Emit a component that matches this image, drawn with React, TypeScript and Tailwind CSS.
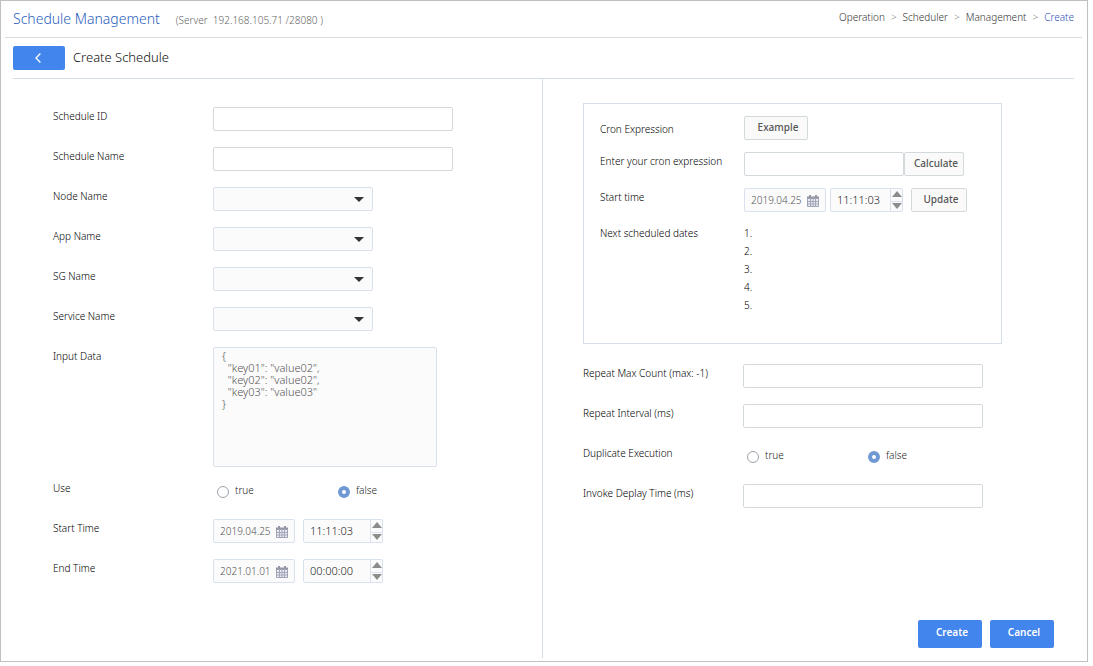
import React from "react"

interface RowProps {
    label: string;
    htmlFor?: string;
    className?: string;
    children: React.ReactNode;
}

const Row: React.FC<RowProps> = ({ label, htmlFor, className = "h-10", children }) => {
    return (
        <div className={`flex items-start ${className}`}>
            <label htmlFor={htmlFor} className="w-40 shrink-0 leading-[18px]">{label}</label>
            {children}
        </div>
    )
}

const TextField: React.FC<{ id: string; className?: string }> = ({ id, className = "w-60" }) => {
    return (
        <input id={id} type="text" className={`h-6 rounded-xs border border-[#d3dadd] bg-white px-2 ${className}`} />
    )
}

const SelectField: React.FC<{ id: string }> = ({ id }) => {
    return (
        <div className="relative w-40">
            <select id={id} className="h-6 w-full appearance-none rounded-xs border border-[#dae1ee] bg-[#fbfbfb] px-2">
                <option value=""></option>
            </select>
            <svg className="pointer-events-none absolute right-[9px] top-2.5 h-[5px] w-[10px]" viewBox="0 0 10 5" fill="#333">
                <path d="M0 0h10L5 5z" />
            </svg>
        </div>
    )
}

const CalendarIcon = () => {
    return (
        <svg width="12" height="12" viewBox="0 0 12 12">
            <path d="M0 1.5h2V0h2v1.5h4V0h2v1.5h2V4H0z" fill="#9597a6" />
            <path d="M0.5 3.5h11v8h-11z" fill="#e9ebf1" stroke="#9fa3b4" />
            <path d="M3.5 4v7.5M6 4v7.5M8.5 4v7.5M1 6.5h10M1 9h10" stroke="#a3a8ba" strokeWidth="1" />
        </svg>
    )
}

const DateField: React.FC<{ id: string; value: string; label: string }> = ({ id, value, label }) => {
    return (
        <div className="flex h-6 w-[82px] shrink-0 items-center rounded-xs border border-[#dae1ee] bg-[#fbfbfb] pl-1.5 text-[#555]">
            <input id={id} type="text" aria-label={label} defaultValue={value} className="w-14 bg-transparent" />
            <button type="button" aria-label="Open calendar" className="pt-0.5">
                <CalendarIcon />
            </button>
        </div>
    )
}

interface TimeFieldProps {
    value: string;
    label: string;
    className?: string;
}

const TimeField: React.FC<TimeFieldProps> = ({ value, label, className = "w-20" }) => {
    return (
        <div className={`flex h-6 shrink-0 rounded-xs border border-[#dae1ee] bg-[#fbfbfb] ${className}`}>
            <input type="text" aria-label={label} defaultValue={value} className="min-w-0 flex-1 bg-transparent pl-1.5 text-[11px] text-[#222]" />
            <div className="flex w-3 flex-col border-l border-[#dae1ee]">
                <button type="button" aria-label="Increase" className="flex flex-1 justify-center border-b border-[#dae1ee] pt-0.5">
                    <svg width="10" height="6" viewBox="0 0 10 6" fill="#8c8c8c"><path d="M0 6h10L5 0z" /></svg>
                </button>
                <button type="button" aria-label="Decrease" className="flex flex-1 items-center justify-center">
                    <svg width="10" height="6" viewBox="0 0 10 6" fill="#8c8c8c"><path d="M0 0h10L5 6z" /></svg>
                </button>
            </div>
        </div>
    )
}

const TrueFalse: React.FC<{ name: string }> = ({ name }) => {
    const radio = "mt-1 size-3 appearance-none rounded-full border border-[#9ba3aa] bg-white checked:border-4 checked:border-[#6f99d3]"
    return (
        <div className="flex pl-1 pt-[3px] text-[#222]">
            <label className="flex w-[121px] gap-1.5">
                <input type="radio" name={name} value="true" className={radio} />
                <span className="leading-4">true</span>
            </label>
            <label className="flex gap-1.5">
                <input type="radio" name={name} value="false" defaultChecked className={radio} />
                <span className="leading-4">false</span>
            </label>
        </div>
    )
}

const GrayButton: React.FC<{ text: string; className: string }> = ({ text, className }) => {
    return (
        <button type="button" className={`h-6 shrink-0 rounded-xs border border-[#d3dadd] bg-[#fafafa] pb-0.5 pl-1 font-medium text-[#555] ${className}`}>
            {text}
        </button>
    )
}

const CronBox = () => {
    const label = "w-36 shrink-0 leading-[18px]"
    return (
        <section className="mb-5 min-h-[241px] w-[419px] border border-[#d9dfe9] pl-4 pt-3">
            <div className="flex h-9">
                <span className={`${label} pt-1`}>Cron Expression</span>
                <GrayButton text="Example" className="w-16" />
            </div>
            <div className="flex h-9">
                <label htmlFor="cron" className={label}>Enter your cron expression</label>
                <TextField id="cron" className="w-40" />
                <GrayButton text="Calculate" className="w-[60px]" />
            </div>
            <div className="flex h-9">
                <label htmlFor="cronDate" className={label}>Start time</label>
                <DateField id="cronDate" label="Start time date" value="2019.04.25" />
                <div className="ml-1 mr-2 flex">
                    <TimeField label="Start time" value="11:11:03" className="w-[73px]" />
                </div>
                <GrayButton text="Update" className="w-14" />
            </div>
            <div className="flex">
                <span className={label}>Next scheduled dates</span>
                <ol className="leading-[18px]">
                    {[1, 2, 3, 4, 5].map((n) => <li key={n}>{n}.</li>)}
                </ol>
            </div>
        </section>
    )
}

const crumbs = ["Operation", "Scheduler", "Management"]

const inputData = `{
  "key01": "value02",
  "key02": "value02",
  "key03": "value03"
}`

const App = () => {
    return (
        <div className="flex min-h-screen bg-white pb-1 pr-[5px] font-['Noto_Sans',sans-serif] text-[10px] font-light text-black">
            <div className="flex flex-1 flex-col border border-[#c0c0c0] pb-[3px]">
                <header className="ml-1 mr-[5px] flex h-[37px] items-center justify-between border-b border-[#d8dce0] px-2">
                    <div className="flex items-baseline gap-4 pb-0.5">
                        <h1 className="text-[14px] font-light text-[#2a61bd]">Schedule Management</h1>
                        <span className="text-[#666]">(Server&nbsp; 192.168.105.71 /28080 )</span>
                    </div>
                    <nav className="flex gap-1.5 pb-1 text-[#333]">
                        {crumbs.map((name) => (
                            <React.Fragment key={name}>
                                <a href="#">{name}</a>
                                <span className="text-[#777]">&gt;</span>
                            </React.Fragment>
                        ))}
                        <a href="#" className="text-[#2f4fb8]">Create</a>
                    </nav>
                </header>
                <main className="ml-3 mr-[13px] flex flex-1 flex-col">
                    <div className="flex h-[41px] items-center gap-2 border-b border-[#d6dde8]">
                        <button type="button" aria-label="Back" className="flex h-6 w-[52px] items-center justify-center rounded-xs bg-[#4285ec] pr-0.5">
                            <svg width="6" height="10" viewBox="0 0 6 10" fill="none" stroke="#fff" strokeWidth="1.3">
                                <path d="M5.4 0.5L1 5l4.4 4.5" />
                            </svg>
                        </button>
                        <h2 className="text-[13px] font-light text-[#111]">Create Schedule</h2>
                    </div>
                    <form className="mr-px grid flex-1 grid-cols-2">
                        <div className="border-r border-[#d6dde8] pl-10 pt-7">
                            <Row label="Schedule ID" htmlFor="scheduleId"><TextField id="scheduleId" /></Row>
                            <Row label="Schedule Name" htmlFor="scheduleName"><TextField id="scheduleName" /></Row>
                            <Row label="Node Name" htmlFor="node"><SelectField id="node" /></Row>
                            <Row label="App Name" htmlFor="app"><SelectField id="app" /></Row>
                            <Row label="SG Name" htmlFor="sg"><SelectField id="sg" /></Row>
                            <Row label="Service Name" htmlFor="service"><SelectField id="service" /></Row>
                            <Row label="Input Data" htmlFor="inputData" className="h-[132px]">
                                <textarea
                                    id="inputData"
                                    defaultValue={inputData}
                                    className="h-[120px] w-56 resize-none rounded-xs border border-[#dae1ee] bg-[#fbfbfb] px-2 py-0.5 text-[11px] leading-3 text-[#555]"
                                />
                            </Row>
                            <Row label="Use"><TrueFalse name="use" /></Row>
                            <Row label="Start Time" htmlFor="startDate">
                                <div className="flex gap-2">
                                    <DateField id="startDate" label="Start date" value="2019.04.25" />
                                    <TimeField label="Start time of day" value="11:11:03" />
                                </div>
                            </Row>
                            <Row label="End Time" htmlFor="endDate">
                                <div className="flex gap-2">
                                    <DateField id="endDate" label="End date" value="2021.01.01" />
                                    <TimeField label="End time of day" value="00:00:00" />
                                </div>
                            </Row>
                        </div>
                        <div className="flex flex-col pl-10 pt-6">
                            <CronBox />
                            <Row label="Repeat Max Count (max: -1)" htmlFor="maxCount"><TextField id="maxCount" /></Row>
                            <Row label="Repeat Interval (ms)" htmlFor="interval"><TextField id="interval" /></Row>
                            <Row label="Duplicate Execution"><TrueFalse name="duplicate" /></Row>
                            <Row label="Invoke Deplay Time (ms)" htmlFor="delay"><TextField id="delay" /></Row>
                            <div className="mb-2.5 mr-[19px] mt-auto flex justify-end gap-2 font-semibold text-white">
                                <button type="submit" className="h-7 w-16 rounded-xs bg-[#4285ec] pb-1 pl-1">Create</button>
                                <button type="button" className="h-7 w-16 rounded-xs bg-[#4285ec] pb-1 pl-1">Cancel</button>
                            </div>
                        </div>
                    </form>
                </main>
            </div>
        </div>
    )
}
export default App
